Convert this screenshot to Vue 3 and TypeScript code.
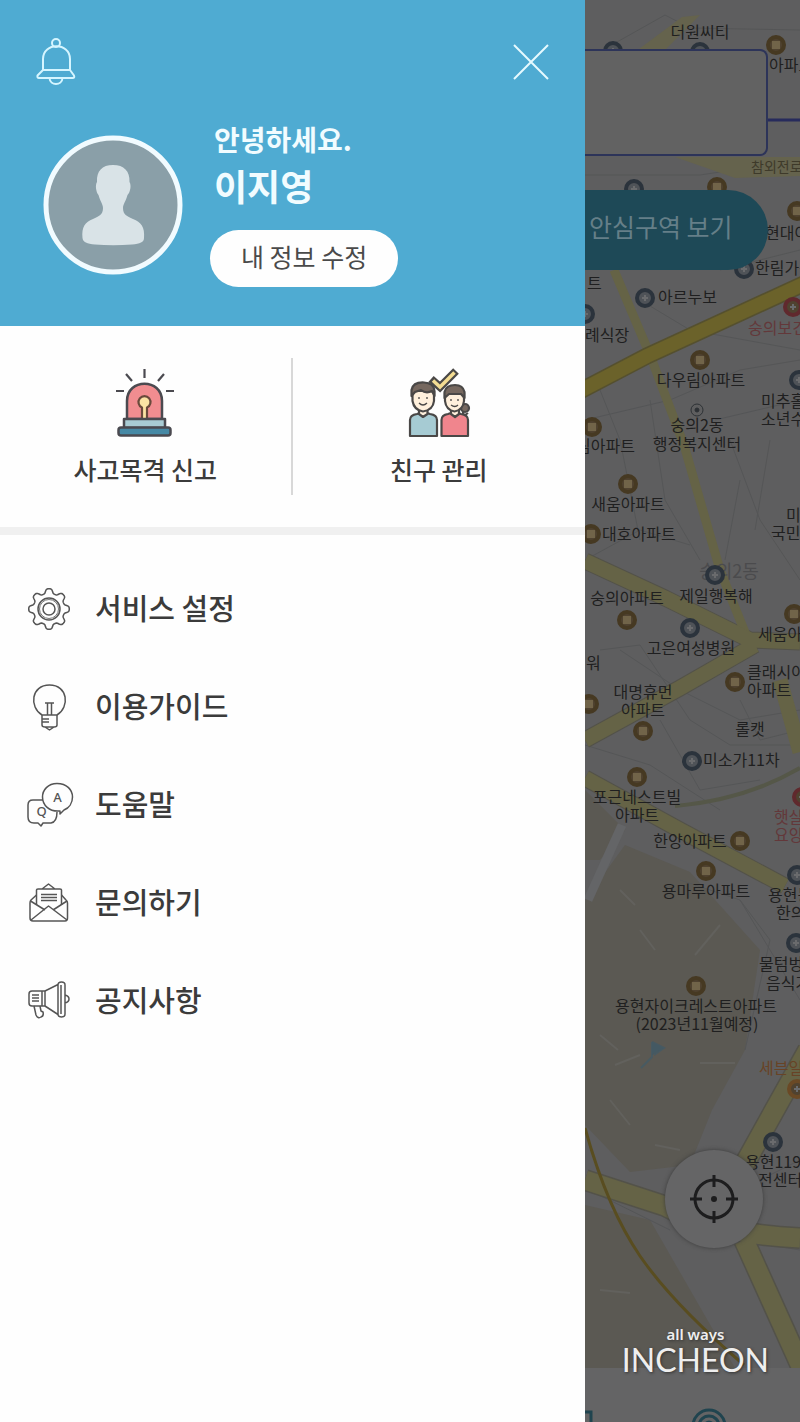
<script setup lang="ts">
import { ref } from 'vue'

type Kind = 'home' | 'blue' | 'red' | 'orange'
interface Pin { x: number; y: number; kind: Kind }
interface Label { x: number; y: number; text: string; tone?: string; start?: boolean }

const menu = [
  { id: 'settings', label: '서비스 설정' },
  { id: 'guide', label: '이용가이드' },
  { id: 'help', label: '도움말' },
  { id: 'contact', label: '문의하기' },
  { id: 'notice', label: '공지사항' },
]

const keyword = ref('')

const gearPath = (() => {
  const points: string[] = []
  for (let i = 0; i < 128; i++) {
    const a = (i / 128) * Math.PI * 2
    const c = Math.cos(8 * a)
    const r = 18 + 2.4 * Math.tanh(1.8 * c)
    points.push(`${(22 + r * Math.cos(a)).toFixed(2)} ${(22 + r * Math.sin(a)).toFixed(2)}`)
  }
  return `M${points.join('L')}Z`
})()

const pins: Pin[] = [
  { x: 613, y: 51, kind: 'blue' }, { x: 700, y: 52, kind: 'blue' }, { x: 776, y: 45, kind: 'home' },
  { x: 634, y: 189, kind: 'blue' }, { x: 717, y: 187, kind: 'home' }, { x: 797, y: 211, kind: 'home' },
  { x: 744, y: 269, kind: 'blue' }, { x: 645, y: 298, kind: 'blue' }, { x: 585, y: 314, kind: 'blue' },
  { x: 793, y: 307, kind: 'red' }, { x: 700, y: 360, kind: 'home' }, { x: 799, y: 380, kind: 'blue' },
  { x: 592, y: 427, kind: 'home' }, { x: 628, y: 484, kind: 'home' }, { x: 591, y: 534, kind: 'home' },
  { x: 715, y: 575, kind: 'blue' }, { x: 627, y: 620, kind: 'home' }, { x: 690, y: 628, kind: 'blue' },
  { x: 794, y: 614, kind: 'home' }, { x: 735, y: 682, kind: 'home' }, { x: 589, y: 704, kind: 'home' },
  { x: 643, y: 731, kind: 'home' }, { x: 692, y: 761, kind: 'blue' }, { x: 637, y: 777, kind: 'home' },
  { x: 802, y: 797, kind: 'red' }, { x: 740, y: 841, kind: 'home' }, { x: 706, y: 871, kind: 'home' },
  { x: 797, y: 875, kind: 'blue' }, { x: 796, y: 943, kind: 'blue' }, { x: 696, y: 986, kind: 'home' },
  { x: 797, y: 1089, kind: 'orange' }, { x: 773, y: 1142, kind: 'blue' },
]

const labels: Label[] = [
  { x: 700, y: 38, text: '더원씨티' },
  { x: 769, y: 71, text: '아파트', start: true },
  { x: 751, y: 172, text: '참외전로', tone: 'road', start: true },
  { x: 765, y: 239, text: '현대아', start: true },
  { x: 755, y: 274, text: '한림가든', start: true },
  { x: 587, y: 289, text: '트', start: true },
  { x: 658, y: 303, text: '아르누보', start: true },
  { x: 585, y: 341, text: '례식장', start: true },
  { x: 748, y: 334, text: '숭의보건', tone: 'red', start: true },
  { x: 701, y: 386, text: '다우림아파트' },
  { x: 697, y: 431, text: '숭의2동' },
  { x: 697, y: 450, text: '행정복지센터' },
  { x: 761, y: 407, text: '미추홀', start: true },
  { x: 761, y: 425, text: '소년수', start: true },
  { x: 576, y: 452, text: '림아파트', start: true },
  { x: 628, y: 510, text: '새움아파트' },
  { x: 602, y: 540, text: '대호아파트', start: true },
  { x: 786, y: 521, text: '미추', start: true },
  { x: 771, y: 539, text: '국민체', start: true },
  { x: 729, y: 578, text: '숭의2동', tone: 'faint' },
  { x: 627, y: 604, text: '숭의아파트' },
  { x: 716, y: 602, text: '제일행복해' },
  { x: 691, y: 654, text: '고은여성병원' },
  { x: 758, y: 640, text: '세움아파', start: true },
  { x: 586, y: 669, text: '워', start: true },
  { x: 747, y: 678, text: '클래시아', start: true },
  { x: 747, y: 696, text: '아파트', start: true },
  { x: 643, y: 698, text: '대명휴먼' },
  { x: 643, y: 716, text: '아파트' },
  { x: 750, y: 735, text: '롤캣' },
  { x: 703, y: 766, text: '미소가11차', start: true },
  { x: 637, y: 803, text: '포근네스트빌' },
  { x: 637, y: 821, text: '아파트' },
  { x: 774, y: 823, text: '햇살', tone: 'red', start: true },
  { x: 774, y: 841, text: '요양', tone: 'red', start: true },
  { x: 690, y: 847, text: '한양아파트' },
  { x: 706, y: 897, text: '용마루아파트' },
  { x: 768, y: 901, text: '용현동', start: true },
  { x: 776, y: 919, text: '한의원', start: true },
  { x: 759, y: 970, text: '물텀벙이', start: true },
  { x: 766, y: 989, text: '음식거리', start: true },
  { x: 696, y: 1012, text: '용현자이크레스트아파트' },
  { x: 697, y: 1030, text: '(2023년11월예정)' },
  { x: 759, y: 1074, text: '세븐일레', tone: 'orange', start: true },
  { x: 745, y: 1168, text: '용현119안', start: true },
  { x: 758, y: 1186, text: '전센터', start: true },
]
</script>

<template>
  <div class="screen">
    <aside class="drawer">
      <header class="head">
        <div class="toolbar">
          <button class="icon-button" type="button" aria-label="알림">
            <svg width="40" height="50" viewBox="0 0 40 50" fill="none" stroke="#d5f5ff" stroke-width="2" stroke-linejoin="round">
              <circle cx="20" cy="6" r="4" />
              <path d="M7 33V22C7 5 34 5 34 22V33Z" />
              <path d="M7 33L1.500 38.500Q1 41 3 41H36.500Q39 41 38 38.500L34 33Z" />
              <path d="M13.500 41C14 49 26 49 26.500 41" />
            </svg>
          </button>
          <button class="icon-button" type="button" aria-label="닫기">
            <svg width="36" height="36" viewBox="0 0 36 36" fill="none" stroke="#e6faff" stroke-width="2">
              <path d="M1 1L35 35M35 1L1 35" />
            </svg>
          </button>
        </div>
        <div class="profile">
          <svg class="avatar" width="140" height="140" viewBox="0 0 140 140" role="img" aria-label="프로필 사진">
            <circle cx="70" cy="70" r="67" fill="#8a9fa8" stroke="#f1fbff" stroke-width="5" />
            <path d="M70 30C59 30 53.500 36 54 47C52 50 53 57 55.500 60C57 66 60 69 60 73C60 80 56 81 50 84C42 87 38.500 92 39.500 103C40 107 44 109 52 109.500Q70 111 89 109.500C97 109 101 107 101 103C102 92 98 87 90 84C84 81 80 80 80 73C80 69 83 66 84.500 60C87.500 57 88.500 50 86.500 47C87 36 81 30 70 30Z" fill="#d9e3e7" />
          </svg>
          <div class="who">
            <p class="hello">안녕하세요.</p>
            <h1 class="name">이지영</h1>
            <button class="edit" type="button">내 정보 수정</button>
          </div>
        </div>
      </header>

      <div class="quick">
        <button class="quick-item" type="button">
          <svg width="62" height="72" viewBox="0 0 62 72" fill="none" stroke="#4b4a50" stroke-width="2.500" stroke-linejoin="round">
            <path d="M30.500 3V12M12 8L18 15M50 8L44 15M2 25H10M52 25H60" stroke-width="2.200" />
            <path d="M13 53V35C13 12 48 12 48 35V53Z" fill="#f18d90" />
            <path d="M28 53V41.500A6 6 0 1 1 33 41.500V53" fill="#fbe3a4" stroke="#6a4a3c" stroke-width="2.200" />
            <rect x="10" y="53" width="41" height="9" fill="#a9ccd4" />
            <rect x="4.500" y="61.500" width="52" height="8" rx="2.500" fill="#4689a5" />
          </svg>
          <span>사고목격 신고</span>
        </button>
        <button class="quick-item" type="button">
          <svg width="66" height="72" viewBox="0 0 66 72" fill="none" stroke="#4a4847" stroke-width="2.200" stroke-linejoin="round">
            <path d="M4 70V54Q4 49 11 48L14 47H21L24 48Q31 49 31 54V70Z" fill="#a6cbd3" />
            <path d="M13 43V48L17 51L21.500 48V43Z" fill="#fff0dc" />
            <path d="M6.500 25H28V35Q27 44 17 45.500Q8 44 6.500 35Z" fill="#fff0dc" />
            <path d="M5.500 30V24Q7 16 18 16.500Q28 17 28.500 25V30L26 25Q20 28 15 24L9 26Z" fill="#76685f" />
            <path d="M13 31V33M21 31V33M13 37Q17 41 21 37" stroke-width="1.300" />
            <circle cx="59" cy="42" r="4" fill="#76685f" />
            <path d="M57 46Q57 51 62 47" />
            <path d="M35.500 70V54Q35.500 49 42 48L45 47H52L55 48Q62 49 62 54V70Z" fill="#f0858d" />
            <path d="M45 43V48L49 51L53 48V43Z" fill="#fff0dc" />
            <path d="M39 27H58V35Q57 44 48.500 45.500Q40 44 39 35Z" fill="#fff0dc" />
            <path d="M38.500 32V26Q40 19 49 19Q57 19 58.500 26V32L55 28H43Z" fill="#76685f" />
            <path d="M45 33V35M52 33V35M45 39Q49 42 52 39" stroke-width="1.300" />
            <path d="M25 13L34 21L50 5" stroke-width="8" stroke-linejoin="miter" />
            <path d="M27 14.500L34 21L48.500 6.500" stroke="#f3dc92" stroke-width="3.500" stroke-linejoin="miter" />
          </svg>
          <span>친구 관리</span>
        </button>
      </div>

      <nav class="menu">
        <a v-for="item in menu" :key="item.id" class="menu-item" :href="'#' + item.id">
          <svg class="menu-icon" width="48" height="48" viewBox="0 0 48 48" aria-hidden="true">
            <g v-if="item.id === 'settings'" transform="translate(1 2)">
              <path :d="gearPath" />
              <circle cx="22" cy="22" r="11" />
              <circle cx="22" cy="22" r="9.500" stroke-width="0.800" />
              <circle cx="22" cy="22" r="6" />
            </g>
            <g v-else-if="item.id === 'guide'" transform="translate(6 1)">
              <path d="M10 31C-3 23-1 1 17.500 1S38 23 25 31" />
              <path d="M10 31H25V41Q25 43 22 43H13Q10 43 10 41ZM10 35H17M10 38H17M13 43L17.500 46L22 43M13 19H22M15.500 19V31M19.500 19V31" />
            </g>
            <g v-else-if="item.id === 'help'" transform="translate(0 1)">
              <path d="M17 18H7Q2 18 2 23V35Q2 41 8 41H12L15 44L17 41H25Q31 40 31 30" />
              <path d="M31 1.500C41 1.500 46.500 8 46.500 15C46.500 21 43 26 38 28L34 32V29C23 30 16.500 23 16.500 15C16.500 8 22 1.500 31 1.500Z" />
              <text x="31.500" y="20" font-size="13">A</text>
              <text x="15.500" y="34" font-size="13">Q</text>
            </g>
            <g v-else-if="item.id === 'contact'" transform="translate(3 3)">
              <path d="M7.500 13L2 18Q1 19 1 21V36Q1 39 4 39H36Q38.500 39 38.500 36V21Q38.500 19 37 18L32.500 13" />
              <path d="M7.500 23V8Q7.500 7 9 7H31Q32.500 7 32.500 8V23M13 7L19.500 2L26 7M12 12.500H28M12 15.500H28M12 18.500H28" />
              <path d="M1.500 19L16 28M38 19L24 28M2 38L19.500 24L38 38" />
            </g>
            <g v-else transform="translate(1 3)">
              <path d="M18 11H5Q2 11 2 14V23Q2 26 5 26H18ZM5 15H12M5 18H12M5 21H12M15 11V26" />
              <path d="M18 11L31 4.500V34.500L18 26M31 5Q31 2 34.500 2T38 5V34Q38 37 34.500 37T31 34ZM34 5V34M38 15Q42 16 42 19T38 23" />
              <path d="M7 26L9 35Q11 39 14 37Q17 36 16 32L14 31L13 26" />
            </g>
          </svg>
          <span class="menu-label">{{ item.label }}</span>
        </a>
      </nav>
    </aside>

    <main class="map">
      <svg class="tiles" viewBox="585 0 215 1422" preserveAspectRatio="xMinYMin slice" role="img" aria-label="지도">
        <rect x="585" width="215" height="1422" fill="#5e5e5f" />
        <path d="M585 900L625 845L690 872L760 950L745 1050L712 1110L690 1165L630 1172L585 1125Z" fill="#5b5953" />
        <path d="M585 790L625 830L600 860H585ZM585 1205L650 1220L735 1368H585Z" fill="#5b5953" />
        <g fill="none" stroke="#555657" stroke-width="1">
          <path d="M585 60L665 15L690 28L800 30M585 175H700L800 160M600 190L640 270M720 270L800 250M640 300L690 330L800 350" />
          <path d="M585 420L670 400L740 370L800 360M650 400L665 500L700 560M715 420L800 400M730 440L760 520L800 580M600 390L620 440L640 540" />
          <path d="M740 480L725 560M770 440L755 530M585 560L640 530L690 545M620 650L680 690L740 720L800 710M600 650L640 645L690 720L730 745H800" />
          <path d="M585 745L650 765L720 810M660 720L700 790L760 780M740 700L760 740L800 730M680 880L740 900L800 1000M740 900L770 940L745 1050" />
          <path d="M730 1160L760 1180L800 1160M585 1188L670 1230M740 1240L800 1250" />
        </g>
        <g fill="none" stroke="#62615d" stroke-width="2">
          <path d="M620 890L635 905M640 930L655 950M695 955L720 925M600 1035L618 1050M615 1065L640 1055M700 1063H735M610 1100L630 1125M655 1145L680 1150M600 1290L630 1293" />
        </g>
        <path d="M635 52L682 17L700 15L665 50ZM675 157H800V176L735 178Z" fill="#65634d" />
        <g fill="none" stroke="#535249" stroke-linejoin="round">
          <path d="M585 561L665 598L750 640L800 642M585 740L680 688L755 645" stroke-width="17" />
          <path d="M585 778L680 830L785 886" stroke-width="17" />
          <path d="M585 1180L665 1206Q720 1235 800 1238M744 1240L808 1382M808 1050L744 1165" stroke-width="22" />
        </g>
        <g fill="none" stroke="#656346" stroke-linejoin="round">
          <path d="M614 270L650 355L684 445L720 570L750 645" stroke-width="9" />
          <path d="M585 561L665 598L750 640L800 642M585 740L680 688L755 645M780 680L800 752" stroke-width="15" />
          <path d="M585 778L680 830L785 886" stroke-width="15" />
          <path d="M585 1180L665 1206Q720 1235 800 1238M744 1240L808 1382M808 1050L744 1165" stroke-width="19" />
        </g>
        <path d="M580 391L647 356L810 281" fill="none" stroke="#55502f" stroke-width="17" />
        <path d="M580 391L647 356L810 281" fill="none" stroke="#6b622a" stroke-width="14" />
        <path d="M622 825L588 900" fill="none" stroke="#646567" stroke-width="9" />
        <path d="M675 806Q745 800 800 768" fill="none" stroke="#555748" stroke-width="4" />
        <path d="M585 1128Q607 1208 640 1256T744 1365" fill="none" stroke="#594d20" stroke-width="3" />
        <path d="M652 1042L664 1048L654 1055M652 1042V1057L641 1068" fill="none" stroke="#485a62" stroke-width="2" />
        <path d="M652 1042L664 1048L652 1055Z" fill="#445963" />
        <g fill="none" stroke="#2d3135"><circle cx="697" cy="410" r="6" /><circle cx="697" cy="410" r="2" fill="#2d3135" /></g>
        <text v-for="(label, i) in labels" :key="'t' + i" :x="label.x" :y="label.y" :class="['place', label.tone, { start: label.start }]">{{ label.text }}</text>
        <g v-for="(pin, i) in pins" :key="i" :class="['pin', pin.kind]">
          <circle :cx="pin.x" :cy="pin.y" r="8" />
          <rect v-if="pin.kind === 'home'" :x="pin.x - 4" :y="pin.y - 4" width="8" height="8" />
          <path v-else :d="`M${pin.x - 3} ${pin.y}H${pin.x + 3}M${pin.x} ${pin.y - 3}V${pin.y + 3}`" />
        </g>
        <path d="M766 120H800" stroke="#272b5c" stroke-width="3" />
      </svg>

      <div class="controls">
        <input v-model="keyword" class="search" type="text" aria-label="장소 검색" />
        <button class="safe" type="button">안심구역 보기</button>
      </div>

      <footer class="tabs">
        <svg width="215" height="54" viewBox="0 0 215 54" fill="none" stroke="#20444f" stroke-width="3" aria-hidden="true">
          <path d="M-4 44H6V56" />
          <circle cx="124" cy="58" r="16" />
          <circle cx="124" cy="58" r="10" />
          <circle cx="124" cy="58" r="4" />
        </svg>
      </footer>

      <button class="locate" type="button" aria-label="현재 위치">
        <svg width="50" height="50" viewBox="0 0 50 50" fill="none" stroke="#1d1d1e" stroke-width="3">
          <circle cx="25" cy="25" r="19" />
          <path d="M25 1V13M25 37V49M1 25H13M37 25H49" />
          <circle cx="25" cy="25" r="3" fill="#1d1d1e" stroke="none" />
        </svg>
      </button>
      <p class="brand"><span class="brand-small">all ways</span><span class="brand-big">INCHEON</span></p>
    </main>
  </div>
</template>

<style>
body {
  margin: 0;
}
</style>

<style scoped>
.screen {
  display: grid;
  grid-template-columns: 117fr 43fr;
  min-height: 100vh;
  font-family: "Noto Sans CJK KR", "Noto Sans", sans-serif;
  color: #3b3b3b;
}
button {
  padding: 0;
  border: 0;
  background: none;
  font: inherit;
  color: inherit;
  cursor: pointer;
}
svg {
  display: block;
}
p,
h1 {
  margin: 0;
}
.drawer {
  background: #fefefe;
}
.head {
  padding: 37px 36px 39px;
  background: #4fabd2;
}
.toolbar {
  display: flex;
  justify-content: space-between;
  align-items: center;
}
.profile {
  display: flex;
  gap: 27px;
  margin-top: 32px;
  padding-left: 7px;
}
.avatar {
  flex: none;
  margin-top: 16px;
}
.who {
  display: flex;
  flex-direction: column;
  align-items: flex-start;
  color: #f1fcff;
}
.hello {
  padding-left: 4px;
  font-size: 28px;
  line-height: 40px;
  font-weight: 700;
}
.name {
  padding-left: 4px;
  font-size: 36px;
  line-height: 52px;
  font-weight: 700;
}
.edit {
  margin-top: 19px;
  padding: 0 31px;
  height: 57px;
  padding-bottom: 5px;
  border-radius: 29px;
  background: #fefefe;
  color: #4a4a4a;
  font-size: 25px;
  line-height: 52px;
}
.quick {
  display: grid;
  grid-template-columns: 1fr 1fr;
  padding: 32px 0;
  border-bottom: 8px solid #f0f0f0;
}
.quick-item {
  display: flex;
  flex-direction: column;
  align-items: center;
  gap: 13px;
  padding: 8px 0;
  font-size: 25px;
  line-height: 36px;
  font-weight: 500;
}
.quick-item:first-child {
  border-right: 2px solid #d8d8d8;
}
.menu {
  padding: 25px 26px;
}
.menu-item {
  display: flex;
  align-items: center;
  gap: 21px;
  height: 98px;
  font-size: 29px;
  font-weight: 500;
  color: inherit;
  text-decoration: none;
}
.menu-label {
  padding-bottom: 4px;
}
.menu-icon {
  flex: none;
  fill: none;
  stroke: #555;
  stroke-width: 1.500;
  stroke-linejoin: round;
}
.menu-icon text {
  fill: #555;
  stroke: none;
  text-anchor: middle;
  font-family: "Noto Sans", sans-serif;
  font-weight: 500;
}
.map {
  position: relative;
  overflow: hidden;
  background: #5e5e5f;
}
.tiles {
  position: absolute;
  inset: 0;
  width: 100%;
  height: 100%;
}
.place {
  fill: #1f1f20;
  font-size: 16px;
  text-anchor: middle;
}
.place.start {
  text-anchor: start;
}
.place.red {
  fill: #63383a;
}
.place.orange {
  fill: #684326;
}
.place.road {
  fill: #3e3a2a;
  font-size: 14px;
}
.place.faint {
  fill: #4b4b4d;
  font-size: 18px;
}
.pin circle {
  stroke-width: 4;
  fill: #4f4230;
  stroke: #463922;
}
.pin rect {
  fill: #716449;
}
.pin path {
  stroke: #6a6b6d;
  stroke-width: 2;
}
.pin.blue circle {
  stroke: #2b333c;
  fill: #4f5358;
}
.pin.red circle {
  stroke: #60292d;
}
.pin.orange circle {
  stroke: #6a4925;
}
.controls {
  position: relative;
  display: flex;
  flex-direction: column;
  gap: 34px;
  padding: 49px 32px 0 0;
}
.search {
  box-sizing: border-box;
  width: 100%;
  height: 107px;
  border: 2px solid #2d3459;
  border-left: 0;
  border-radius: 0 8px 8px 0;
  background: #626262;
  font-size: 25px;
}
.safe {
  height: 80px;
  padding: 0 0 8px 4px;
  border-radius: 0 40px 40px 0;
  background: #1e4957;
  color: #657f88;
  font-size: 25px;
  line-height: 72px;
  text-align: left;
  white-space: nowrap;
}
.tabs {
  position: absolute;
  left: 0;
  right: 0;
  bottom: 0;
  height: 54px;
  overflow: hidden;
  background: #646465;
}
.locate {
  position: absolute;
  right: 37px;
  bottom: 174px;
  display: grid;
  place-items: center;
  width: 98px;
  height: 98px;
  border-radius: 50%;
  background: #656566;
  box-shadow: 0 0 4px #3c3c3c;
}
.brand {
  position: absolute;
  right: 31px;
  bottom: 44px;
  display: flex;
  flex-direction: column;
  align-items: center;
  color: #eee;
  text-shadow: 1px 1px 3px #333;
}
.brand-small {
  font-family: "Noto Sans", sans-serif;
  font-size: 15px;
  line-height: 16px;
  font-weight: 600;
}
.brand-big {
  font-family: Lato, sans-serif;
  font-size: 32px;
  line-height: 36px;
}
</style>
